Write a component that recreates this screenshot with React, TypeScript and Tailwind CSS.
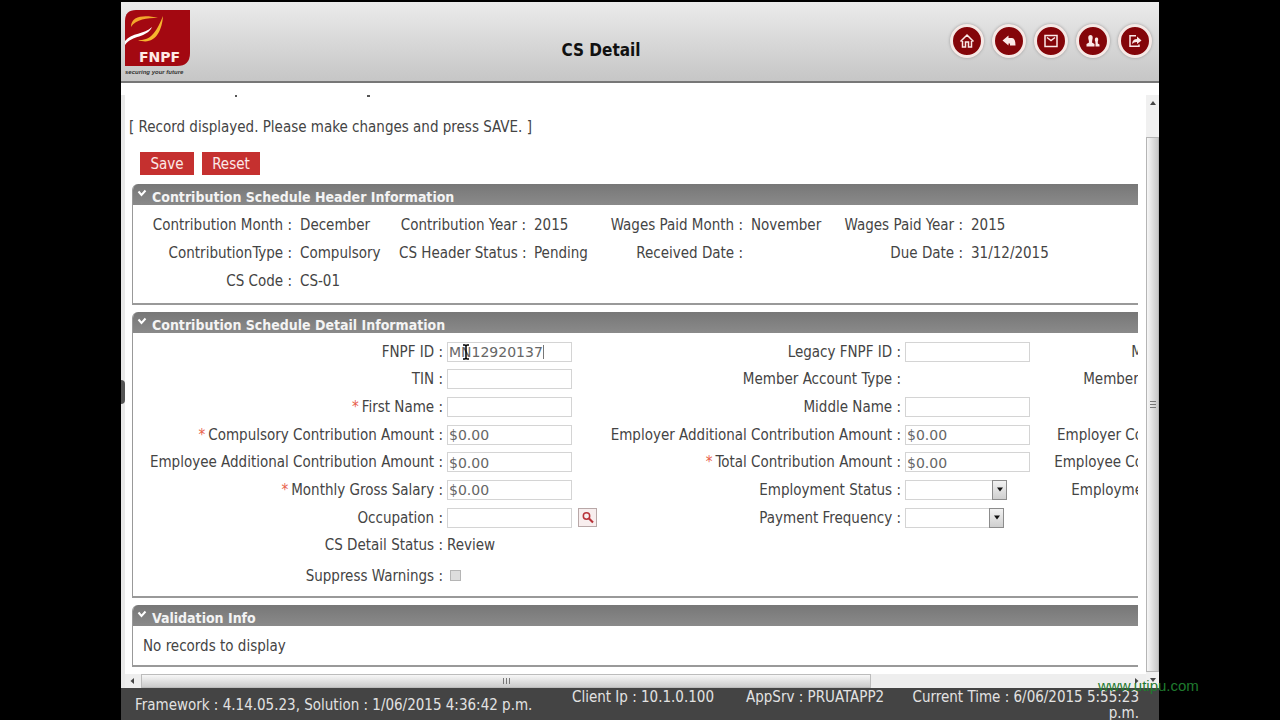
import React from "react";

const sectionTitle = "flex h-[21px] items-end gap-1 bg-gradient-to-b from-[#777777] to-[#8a8a8a] pl-[3px] text-white";

function Section({ title, className, children }: { title: string; className: string; children: React.ReactNode }) {
  return (
    <section className="overflow-hidden rounded-tl-md border-b-2 border-l border-[#999999]">
      <h2 className={sectionTitle}>
        <svg viewBox="0 0 12 16" className="h-4 w-3 self-start" fill="none" stroke="#fff" strokeWidth="2">
          <path d="M2.5 7.5 L5.5 11 L9.5 6.5" />
        </svg>
        <span className="text-sm leading-4 font-bold text-[#f4f4f4]">{title}</span>
      </h2>
      <div className={className}>{children}</div>
    </section>
  );
}

const headerRows = [
  ["Contribution Month", "December", "Contribution Year", "2015", "Wages Paid Month", "November", "Wages Paid Year", "2015"],
  ["ContributionType", "Compulsory", "CS Header Status", "Pending", "Received Date", "", "Due Date", "31/12/2015"],
  ["CS Code", "CS-01"],
];

function Label({ id, required, children }: { id?: string; required?: boolean; children: React.ReactNode }) {
  return (
    <label htmlFor={id} className="justify-self-end whitespace-nowrap">
      {required && <span className="mr-[3px] text-[#e8604a]">*</span>}
      {children} :
    </label>
  );
}

function TextBox({ id, value = "" }: { id: string; value?: string }) {
  return (
    <input
      id={id}
      type="text"
      defaultValue={value}
      className="block h-5 w-[125px] border border-[#d4d4d4] bg-white px-px pt-px font-['DejaVu_Sans',sans-serif] text-sm text-[#666666] outline-none"
    />
  );
}

function Select({ id, width }: { id: string; width: string }) {
  return (
    <div className={`relative ${width}`}>
      <select id={id} className="block h-5 w-full appearance-none border border-[#d4d4d4] bg-white outline-none">
        <option value=""></option>
      </select>
      <span className="pointer-events-none absolute top-0 right-0 flex h-5 w-[15px] items-center justify-center border border-[#8c8c8c] bg-gradient-to-b from-[#f2f2f2] to-[#cfcfcf]">
        <svg viewBox="0 0 8 5" className="h-[5px] w-2"><path d="M1 0.5h6L4 4.5z" fill="#111" /></svg>
      </span>
    </div>
  );
}

function RoundButton({ label, children }: { label: string; children: React.ReactNode }) {
  return (
    <button type="button" aria-label={label} className="flex size-[34px] items-center justify-center rounded-full border-3 border-[#f5e9e6] bg-[#840509] shadow-[0_0_3px_#999999]">
      <svg viewBox="0 0 16 16" className="size-4" fill="none" stroke="#fbe9e7" strokeWidth="1.5">{children}</svg>
    </button>
  );
}

export default function App() {
  return (
    <div className="flex min-h-screen flex-col overflow-hidden bg-black px-[121px] pt-[2px] font-['DejaVu_Sans_Condensed','DejaVu_Sans',sans-serif] text-[15px] leading-5 text-[#444444]">
      <header className="flex h-[81px] items-start border-b-2 border-[#777777] bg-gradient-to-b from-[#ebebeb] to-[#c6c6c6] pr-[7px] pl-1">
        <svg viewBox="0 0 66 66" className="mt-2 h-[66px] w-[66px]" role="img" aria-label="FNPF">
          <path d="M11 0H65V43Q65 56 52 56H0V11Q0 0 11 0Z" fill="#a30811" />
          <path d="M0 31C7 22 19 25 27 17C22 28 7 25 0 35Z" fill="#fff" />
          <path d="M6 17C6 5 21 5 33 8C22 8 11 9 6 17Z" fill="#f2a62c" />
          <path d="M38 6C37 22 29 36 13 30C27 31 32 20 38 6Z" fill="#f6b52e" />
          <text x="14" y="52" fill="#ffe9e6" fontSize="14" fontWeight="bold" fontFamily="DejaVu Sans" className="font-['DejaVu_Sans',sans-serif]">FNPF</text>
          <text x="0" y="64" fill="#333" fontSize="6" fontWeight="bold" fontStyle="italic" fontFamily="Liberation Sans">securing your future</text>
        </svg>
        <h1 className="flex-1 pt-[38px] pl-[61px] text-center text-[17px] font-bold text-[#111111]">CS Detail</h1>
        <nav className="flex gap-2 pt-[22px]">
          <RoundButton label="Home"><path d="M1.5 8.5L8 2L14.5 8.5M3.5 8V14H6.5V9H9.5V14H12.5V8" /></RoundButton>
          <RoundButton label="Back"><path d="M1.5 7.500L7.500 2.500V5H11Q14.500 5 14.500 12.500H9V10.500H7.500V12.500Z" fill="#fbe9e7" stroke="none" /></RoundButton>
          <RoundButton label="Mail"><path d="M2 2.500H14V13.500H2ZM4 4.500L8 7.500L12 4.500" /></RoundButton>
          <RoundButton label="Users"><path d="M5.500 2C8 2 8 5 7.300 7L7 9.500L9.500 11V13.500H1.500V11L4 9.500L3.700 7C3 5 3 2 5.500 2ZM11.500 4.500C13.500 4.500 13.500 7 12.800 8.500V10.500L14.500 11.500V13.500H10.500V10.500L10.300 8.500C9.600 7 9.600 4.500 11.500 4.500Z" fill="#fbe9e7" stroke="none" /></RoundButton>
          <RoundButton label="Sign out"><path d="M9 2.700H3V13.300H12V11.500" /><path d="M5 11Q5.500 6 10 6V3.500L14.500 7.500L10 11V9Q7 8.800 5 11Z" fill="#fbe9e7" stroke="none" /></RoundButton>
        </nav>
      </header>

      <div className="flex flex-1 bg-white pt-3">
        <div className="flex w-1 items-center bg-[#e9e9e9]">
          <span className="h-6 w-1 rounded-r bg-[#555555]" />
        </div>
        <main className="min-w-0 flex-1">
          <div className="overflow-hidden pr-2 pl-[7px]">
            <div className="flex h-[22px] items-start gap-[130px] pl-[103px]">
              <span className="h-[2px] w-[2px] bg-[#555555]" />
              <span className="h-[2px] w-[3px] bg-[#555555]" />
            </div>
            <p className="-ml-[3px]">[ Record displayed. Please make changes and press SAVE. ]</p>
            <div className="flex gap-2 pt-[15px] pb-[9px] pl-2 text-[#fbe9e7]">
              <button type="button" className="h-[23px] w-[54px] bg-[#c5302f]">Save</button>
              <button type="button" className="h-[23px] w-[58px] bg-[#c5302f]">Reset</button>
            </div>
            <div className="flex flex-col gap-[7px]">
              <Section title="Contribution Schedule Header Information" className="pt-[6px] pb-2">
                <dl className="grid auto-rows-[28px] grid-cols-[159px_91px_127px_67px_134px_80px_124px_1fr] items-center gap-x-2 whitespace-nowrap">
                  {headerRows.flat().map((text, i) =>
                    i % 2 === 0 ? <dt key={i} className="text-right">{text} :</dt> : <dd key={i}>{text}</dd>
                  )}
                </dl>
              </Section>

              <Section title="Contribution Schedule Detail Information" className="pt-[5px] pb-[10px]">
                <form className="grid grid-cols-[310px_150px_300px_125px_109px] gap-x-1">
                  <div className="col-span-5 grid min-h-[221px] grid-cols-subgrid grid-rows-8 items-center">
                    <Label id="fnpf">FNPF ID</Label>
                    <div className="relative">
                      <TextBox id="fnpf" value="MN12920137" />
                      <svg viewBox="0 0 8 16" className="absolute top-[2px] left-[15px] h-4 w-2" fill="none" stroke="#000" strokeWidth="1.500">
                        <path d="M1 1H3L4 2L5 1H7M4 2V14M1 15H3L4 14L5 15H7" />
                      </svg>
                      <span className="absolute top-[3px] left-24 h-[14px] w-px bg-[#777777]" />
                    </div>
                    <Label id="legacy">Legacy FNPF ID</Label>
                    <TextBox id="legacy" />
                    <span className="text-right">M</span>

                    <Label id="tin">TIN</Label>
                    <TextBox id="tin" />
                    <Label>Member Account Type</Label>
                    <span />
                    <span className="text-right">Member&nbsp;</span>

                    <Label id="first" required>First Name</Label>
                    <TextBox id="first" />
                    <Label id="middle">Middle Name</Label>
                    <TextBox id="middle" />
                    <span />

                    <Label id="compulsory" required>Compulsory Contribution Amount</Label>
                    <TextBox id="compulsory" value="$0.00" />
                    <Label id="employer">Employer Additional Contribution Amount</Label>
                    <TextBox id="employer" value="$0.00" />
                    <span className="text-right">Employer Co</span>

                    <Label id="employee">Employee Additional Contribution Amount</Label>
                    <TextBox id="employee" value="$0.00" />
                    <Label id="total" required>Total Contribution Amount</Label>
                    <TextBox id="total" value="$0.00" />
                    <span className="text-right">Employee Co</span>

                    <Label id="salary" required>Monthly Gross Salary</Label>
                    <TextBox id="salary" value="$0.00" />
                    <Label id="status">Employment Status</Label>
                    <Select id="status" width="w-[102px]" />
                    <span className="text-right">Employme</span>

                    <Label id="occupation">Occupation</Label>
                    <div className="flex items-center gap-[6px]">
                      <TextBox id="occupation" />
                      <button type="button" aria-label="Find occupation" className="flex size-[19px] shrink-0 items-center justify-center border border-[#b8a8a8] bg-[#f8eeee]">
                        <svg viewBox="0 0 14 14" className="size-[14px]" fill="none" stroke="#b8333a" strokeWidth="1.500">
                          <circle cx="5.500" cy="5" r="3.200" />
                          <path d="M8 7.500L12 11.500" strokeWidth="2.200" />
                        </svg>
                      </button>
                    </div>
                    <Label id="frequency">Payment Frequency</Label>
                    <Select id="frequency" width="w-[99px]" />
                    <span />

                    <Label>CS Detail Status</Label>
                    <span>Review</span>
                  </div>
                  <div className="col-span-5 grid h-[27px] grid-cols-subgrid items-end">
                    <Label id="suppress">Suppress Warnings</Label>
                    <input id="suppress" type="checkbox" className="mb-[5px] ml-[3px] size-[11px] appearance-none border border-[#b5b5b5] bg-[#dddddd]" />
                  </div>
                </form>
              </Section>

              <Section title="Validation Info" className="px-[10px] pt-[10px] pb-[9px]">
                <p>No records to display</p>
              </Section>
            </div>
          </div>
          <div className="mt-[7px] flex h-[14px] items-center bg-[#eeeeee]">
            <svg viewBox="0 0 16 14" className="h-[14px] w-4"><path d="M9 4V10L5.500 7Z" fill="#444" /></svg>
            <span className="flex h-full w-[730px] items-center justify-center border border-[#bcbcbc] bg-gradient-to-b from-[#f7f7f7] to-[#cccccc]">
              <svg viewBox="0 0 7 6" className="h-[6px] w-[7px]" stroke="#777"><path d="M.5 0V6M3.500 0V6M6.500 0V6" /></svg>
            </span>
            <svg viewBox="0 0 16 14" className="ml-auto h-[14px] w-4"><path d="M5 4V10L8.500 7Z" fill="#444" /></svg>
          </div>
        </main>
        <div className="flex w-[13px] flex-col items-center bg-[#f0f0f0]">
          <svg viewBox="0 0 13 42" className="h-[42px] w-[13px]"><path d="M4 10H10L7 6Z" fill="#444" /></svg>
          <span className="flex w-full flex-1 items-center justify-center border border-[#b5b5b5] bg-gradient-to-r from-[#f7f7f7] to-[#c8c8c8]">
            <svg viewBox="0 0 6 7" className="h-[7px] w-[6px]" stroke="#777"><path d="M0 .5H6M0 3.500H6M0 6.500H6" /></svg>
          </span>
          <svg viewBox="0 0 13 16" className="h-4 w-[13px]"><path d="M4 6H10L7 10Z" fill="#444" /></svg>
        </div>
      </div>

      <footer className="flex h-8 bg-[#444444] pt-px pr-5 pl-[14px] leading-4 text-[#e2e2e2]">
        <span className="w-[437px] pt-2 whitespace-nowrap">Framework : 4.14.05.23, Solution : 1/06/2015 4:36:42 p.m.</span>
        <span className="w-[174px]">Client Ip : 10.1.0.100</span>
        <span>AppSrv : PRUATAPP2</span>
        <span className="ml-auto w-[228px] text-right leading-4">Current Time : 6/06/2015 5:55:23 p.m.</span>
      </footer>
      <a href="http://www.utipu.com" className="absolute top-[677px] left-[1098px] font-['Liberation_Sans',sans-serif] text-[15px] leading-[18px] text-[#1f7a2e]">www.utipu.com</a>
    </div>
  );
}
